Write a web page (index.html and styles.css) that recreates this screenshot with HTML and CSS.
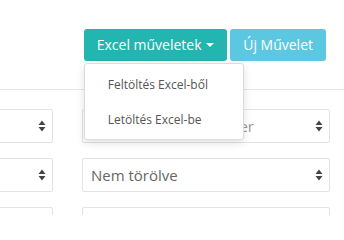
FILE: index.html
```html
<!DOCTYPE html>
<html lang="hu">
<head>
<meta charset="utf-8">
<link rel="stylesheet" href="styles.css">
</head>
<body>
<div class="page">
  <div class="toolbar">
    <div class="dropdown">
      <button class="btn btn-teal">Excel műveletek <span class="caret"></span></button>
      <ul class="menu">
        <li>Feltöltés Excel-ből</li>
        <li>Letöltés Excel-be</li>
      </ul>
    </div>
    <button class="btn btn-info">Új Művelet</button>
  </div>
  <div class="panel">
    <div class="grid">
      <div class="select"><span class="val"></span><svg class="arr" width="8" height="12" viewBox="0 0 8 12"><path d="M4 0.5 L7.5 5 H0.5 Z M4 11.5 L7.5 7 H0.5 Z" fill="#444"/></svg></div>
      <div class="select"><span class="val ph">Nincs megadva partner</span><svg class="arr" width="8" height="12" viewBox="0 0 8 12"><path d="M4 0.5 L7.5 5 H0.5 Z M4 11.5 L7.5 7 H0.5 Z" fill="#444"/></svg></div>
      <div class="select"><span class="val"></span><svg class="arr" width="8" height="12" viewBox="0 0 8 12"><path d="M4 0.5 L7.5 5 H0.5 Z M4 11.5 L7.5 7 H0.5 Z" fill="#444"/></svg></div>
      <div class="select"><span class="val">Nem törölve</span><svg class="arr" width="8" height="12" viewBox="0 0 8 12"><path d="M4 0.5 L7.5 5 H0.5 Z M4 11.5 L7.5 7 H0.5 Z" fill="#444"/></svg></div>
      <div class="select"></div>
      <div class="select"></div>
    </div>
  </div>
</div>
</body>
</html>
```
FILE: styles.css
```css
* { box-sizing: border-box; }
html, body { margin: 0; padding: 0; background: #fff; }
body {
  font-family: "Open Sans", "Liberation Sans", sans-serif;
  color: #555;
  width: 344px;
  height: 215px;
  overflow: hidden;
}
.page { position: relative; }
.toolbar {
  display: flex;
  justify-content: flex-end;
  gap: 3px;
  padding: 29px 18px 0 0;
  height: 89px;
}
.dropdown { position: relative; }
.btn {
  font-family: inherit;
  font-size: 14px;
  color: #fff;
  border: none;
  border-radius: 3px;
  height: 32px;
  padding: 0 13px;
  line-height: 32px;
  cursor: pointer;
}
.btn-teal { background: #23b5b0; }
.btn-info { background: #5cc7e0; }
.caret {
  display: inline-block;
  width: 0; height: 0;
  border-left: 4px solid transparent;
  border-right: 4px solid transparent;
  border-top: 4px solid #fff;
  vertical-align: middle;
  margin-left: 1px;
  margin-bottom: 2px;
}
.menu {
  position: absolute;
  top: 34px;
  left: 0;
  z-index: 5;
  width: 160px;
  margin: 0;
  padding: 3px 0 2px;
  list-style: none;
  background: #fff;
  border: 1px solid #dcdcdc;
  border-radius: 3px;
  box-shadow: 0 3px 8px rgba(0,0,0,0.12);
}
.menu li {
  height: 35px;
  line-height: 35px;
  padding-left: 23px;
  font-size: 12px;
  color: #555;
}
.panel {
  border-top: 1px solid #e8e8e8;
  padding-top: 19px;
  margin-left: -100px;
}
.grid {
  display: grid;
  grid-template-columns: 153px 248px;
  column-gap: 29px;
  row-gap: 15px;
}
.select {
  height: 34px;
  border: 1px solid #e3e3e3;
  border-radius: 2px;
  display: flex;
  align-items: center;
  justify-content: space-between;
  padding: 0 6px 0 8px;
  font-size: 15px;
  color: #666;
  overflow: hidden;
}
.val { white-space: nowrap; overflow: hidden; }
.ph { color: #999; }
.arr { flex: none; }
```
